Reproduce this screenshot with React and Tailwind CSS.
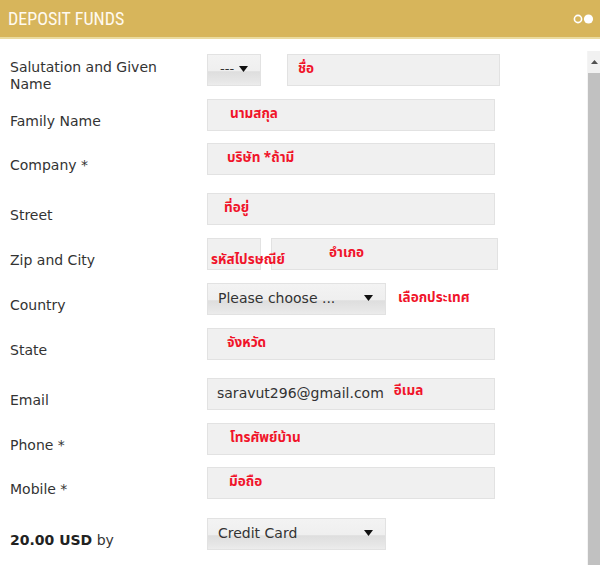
const SELECT_BG =
  "bg-[linear-gradient(to_bottom,#f3f3f3_0%,#efefef_52%,#dedede_56%,#e6e6e6_85%,#ececec_100%)]";

function TextBox({ width, text, pad, extra }) {
  return (
    <div
      className={`h-[32px] ${width} border border-[#e2e2e2] bg-[#f0f0f0] flex items-start ${pad} pt-[5px] overflow-visible`}
    >
      <span className="whitespace-nowrap font-bold text-[13.5px] leading-[18px] text-[#f0142a] font-['Tahoma','Noto_Sans_Thai','Loma','Garuda',sans-serif]">
        {text}
      </span>
      {extra}
    </div>
  );
}

function SelectBox({ width, text, textClass }) {
  return (
    <div
      className={`h-[32px] ${width} border border-[#e2e2e2] ${SELECT_BG} flex items-center justify-between pl-[10px] pr-[12px] pb-[2px]`}
    >
      <span className={`whitespace-nowrap text-[#333] font-['DejaVu_Sans',sans-serif] ${textClass}`}>{text}</span>
      <svg width="9" height="6" viewBox="0 0 9 6">
        <path d="M0 0 H9 L4.5 6 Z" fill="#111" />
      </svg>
    </div>
  );
}

function Label({ children }) {
  return (
    <div className="w-[207px] shrink-0 pl-[10px] h-[44px] flex items-center">
      <div className="text-[14px] leading-[17px] text-[#333] font-['DejaVu_Sans',sans-serif] max-w-[170px]">
        {children}
      </div>
    </div>
  );
}

function Row({ mt, label, children }) {
  return (
    <div className={`flex items-start ${mt}`}>
      <Label>{label}</Label>
      <div className="h-[44px] flex items-start">{children}</div>
    </div>
  );
}

function RedNote({ children, className }) {
  return (
    <span
      className={`whitespace-nowrap font-bold text-[13.5px] leading-[18px] text-[#f0142a] font-['Tahoma','Noto_Sans_Thai','Loma','Garuda',sans-serif] ${className}`}
    >
      {children}
    </span>
  );
}

export default function App() {
  return (
    <div className="w-[600px] h-[565px] overflow-hidden bg-white flex flex-col">
      {/* header */}
      <div className="h-[39px] shrink-0 bg-[#d7b55b] border-b-2 border-[#eadb9f] flex items-center justify-between pl-[8px] pr-[5px]">
        <span className="text-[18px] text-[#fffaf0] font-['Liberation_Sans_Narrow','Roboto_Condensed','Roboto',sans-serif]">
          DEPOSIT FUNDS
        </span>
        <svg width="22" height="12" viewBox="0 0 22 12">
          <circle cx="5" cy="6" r="3.6" fill="none" stroke="#fff" strokeWidth="1.6" />
          <circle cx="15.5" cy="6" r="4.6" fill="#fff" />
        </svg>
      </div>

      <div className="flex flex-1 min-h-0">
        {/* form */}
        <div className="flex-1 pt-[15px]">
          <Row mt="mt-0" label="Salutation and Given Name">
            <SelectBox width="w-[54px]" text="---" textClass="text-[13px] pl-[2px]" />
            <div className="ml-[26px]">
              <TextBox width="w-[213px]" pad="pl-[10px]" text="ชื่อ" />
            </div>
          </Row>
          <Row mt="mt-px" label="Family Name">
            <TextBox width="w-[288px]" pad="pl-[22px]" text="นามสกุล" />
          </Row>
          <Row mt="mt-0" label="Company *">
            <TextBox width="w-[288px]" pad="pl-[19px]" text="บริษัท *ถ้ามี" />
          </Row>
          <Row mt="mt-[6px]" label="Street">
            <TextBox width="w-[288px]" pad="pl-[16px]" text="ที่อยู่" />
          </Row>
          <Row mt="mt-px" label="Zip and City">
            <div className="h-[32px] w-[54px] border border-[#e2e2e2] bg-[#f0f0f0] pt-[7px] pl-[3px] overflow-visible relative z-10">
              <RedNote>รหัสไปรษณีย์</RedNote>
            </div>
            <div className="ml-[10px]">
              <TextBox width="w-[227px]" pad="pl-[57px]" text="อำเภอ" />
            </div>
          </Row>
          <Row mt="mt-px" label="Country">
            <SelectBox width="w-[179px]" text="Please choose ..." textClass="text-[14px]" />
            <RedNote className="ml-[12px] mt-[6px]">เลือกประเทศ</RedNote>
          </Row>
          <Row mt="mt-px" label="State">
            <TextBox width="w-[288px]" pad="pl-[19px]" text="จังหวัด" />
          </Row>
          <Row mt="mt-[6px]" label="Email">
            <div className="h-[32px] w-[288px] border border-[#e2e2e2] bg-[#f0f0f0] flex items-center pl-[9px] pb-[2px]">
              <span className="text-[14px] text-[#333] font-['DejaVu_Sans',sans-serif] whitespace-nowrap">
                saravut296@gmail.com
              </span>
              <RedNote className="ml-[10px] mb-[4px]">อีเมล</RedNote>
            </div>
          </Row>
          <Row mt="mt-px" label="Phone *">
            <TextBox width="w-[288px]" pad="pl-[22px]" text="โทรศัพย์บ้าน" />
          </Row>
          <Row mt="mt-0" label="Mobile *">
            <TextBox width="w-[288px]" pad="pl-[21px]" text="มือถือ" />
          </Row>
          <Row
            mt="mt-[7px]"
            label={
              <span>
                <b className="text-[#222]">20.00 USD</b> by
              </span>
            }
          >
            <SelectBox width="w-[179px]" text="Credit Card" textClass="text-[14px]" />
          </Row>
        </div>

        {/* scrollbar */}
        <div className="w-[13px] shrink-0 pt-[12px] flex flex-col">
          <div className="flex-1 flex flex-col border-l border-[#f4f4f4]">
            <div className="h-[22px] bg-[#f1f1f1] flex items-center justify-center">
              <svg width="7" height="4" viewBox="0 0 7 4">
                <path d="M0 4 L3.5 0 L7 4 Z" fill="#505050" />
              </svg>
            </div>
            <div className="flex-1 bg-[#c1c1c1]" />
          </div>
        </div>
      </div>
    </div>
  );
}
